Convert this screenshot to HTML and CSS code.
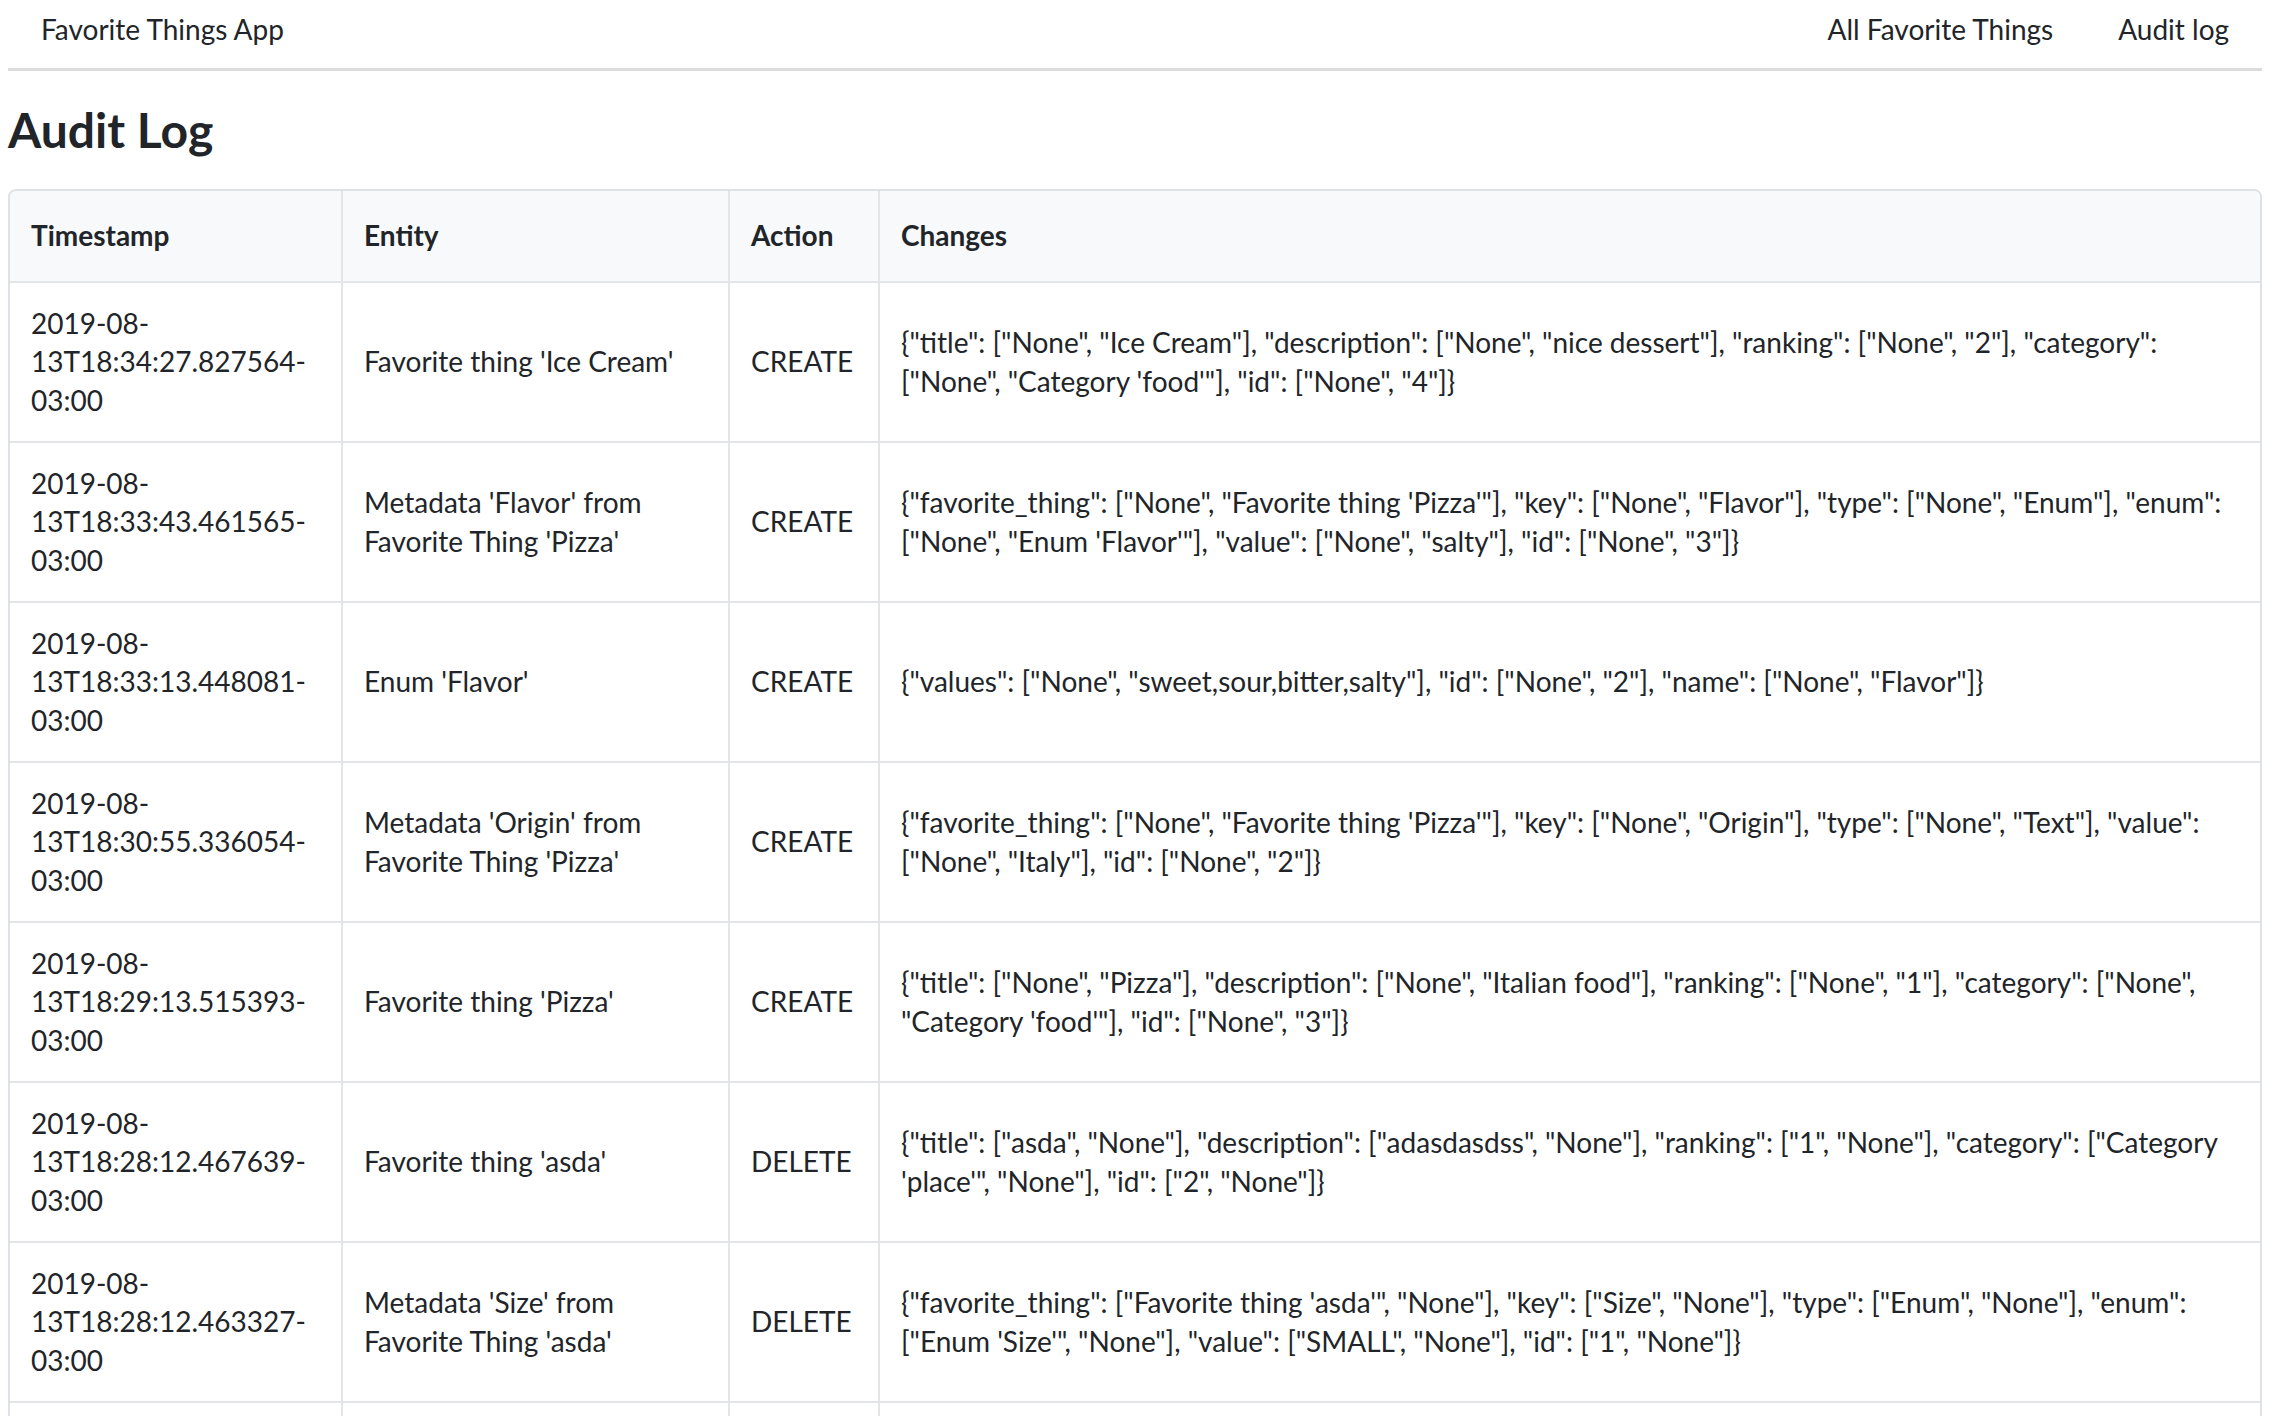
FILE: index.html
```html
<!DOCTYPE html>
<html lang="en">
<head>
<meta charset="utf-8">
<title>Favorite Things App - Audit Log</title>
<link rel="stylesheet" href="styles.css">
</head>
<body>
<div class="page">
  <nav class="navbar">
    <a class="brand" href="#">Favorite Things App</a>
    <div class="nav-links">
      <a class="nav-link" href="#">All Favorite Things</a>
      <a class="nav-link" href="#">Audit log</a>
    </div>
  </nav>

  <h1 class="title">Audit Log</h1>

  <div class="table-wrap">
    <table class="audit">
      <colgroup>
        <col class="col-ts">
        <col class="col-entity">
        <col class="col-action">
        <col class="col-changes">
      </colgroup>
      <thead>
        <tr>
          <th>Timestamp</th>
          <th>Entity</th>
          <th>Action</th>
          <th>Changes</th>
        </tr>
      </thead>
      <tbody>
        <tr>
          <td>2019-08-13T18:34:27.827564-03:00</td>
          <td>Favorite thing 'Ice Cream'</td>
          <td>CREATE</td>
          <td>{"title": ["None", "Ice Cream"], "description": ["None", "nice dessert"], "ranking": ["None", "2"], "category": ["None", "Category 'food'"], "id": ["None", "4"]}</td>
        </tr>
        <tr>
          <td>2019-08-13T18:33:43.461565-03:00</td>
          <td>Metadata 'Flavor' from Favorite Thing 'Pizza'</td>
          <td>CREATE</td>
          <td>{"favorite_thing": ["None", "Favorite thing 'Pizza'"], "key": ["None", "Flavor"], "type": ["None", "Enum"], "enum": ["None", "Enum 'Flavor'"], "value": ["None", "salty"], "id": ["None", "3"]}</td>
        </tr>
        <tr>
          <td>2019-08-13T18:33:13.448081-03:00</td>
          <td>Enum 'Flavor'</td>
          <td>CREATE</td>
          <td>{"values": ["None", "sweet,sour,bitter,salty"], "id": ["None", "2"], "name": ["None", "Flavor"]}</td>
        </tr>
        <tr>
          <td>2019-08-13T18:30:55.336054-03:00</td>
          <td>Metadata 'Origin' from Favorite Thing 'Pizza'</td>
          <td>CREATE</td>
          <td>{"favorite_thing": ["None", "Favorite thing 'Pizza'"], "key": ["None", "Origin"], "type": ["None", "Text"], "value": ["None", "Italy"], "id": ["None", "2"]}</td>
        </tr>
        <tr>
          <td>2019-08-13T18:29:13.515393-03:00</td>
          <td>Favorite thing 'Pizza'</td>
          <td>CREATE</td>
          <td>{"title": ["None", "Pizza"], "description": ["None", "Italian food"], "ranking": ["None", "1"], "category": ["None", "Category 'food'"], "id": ["None", "3"]}</td>
        </tr>
        <tr>
          <td>2019-08-13T18:28:12.467639-03:00</td>
          <td>Favorite thing 'asda'</td>
          <td>DELETE</td>
          <td>{"title": ["asda", "None"], "description": ["adasdasdss", "None"], "ranking": ["1", "None"], "category": ["Category 'place'", "None"], "id": ["2", "None"]}</td>
        </tr>
        <tr>
          <td>2019-08-13T18:28:12.463327-03:00</td>
          <td>Metadata 'Size' from Favorite Thing 'asda'</td>
          <td>DELETE</td>
          <td>{"favorite_thing": ["Favorite thing 'asda'", "None"], "key": ["Size", "None"], "type": ["Enum", "None"], "enum": ["Enum 'Size'", "None"], "value": ["SMALL", "None"], "id": ["1", "None"]}</td>
        </tr>
        <tr>
          <td>2019-08-13T18:28:12.459101-03:00</td>
          <td>Enum 'Size'</td>
          <td>DELETE</td>
          <td>{"values": ["SMALL,MEDIUM,LARGE", "None"], "id": ["1", "None"], "name": ["Size", "None"]}</td>
        </tr>
      </tbody>
    </table>
  </div>
</div>
</body>
</html>
```

FILE: styles.css
```css
html, body {
  margin: 0;
  padding: 0;
  background: #ffffff;
}

body {
  font-family: "Lato", "Noto Sans", "Liberation Sans", sans-serif;
  font-size: 28px;
  line-height: 38.4px;
  color: #212529;
}

.page {
  margin: 0 18px 0 8px;
}

.navbar {
  display: flex;
  justify-content: space-between;
  align-items: baseline;
  padding: 10px 33px 20px 33px;
  border-bottom: 3px solid #dcdcdc;
}

.brand,
.nav-link {
  color: #212529;
  text-decoration: none;
}

.nav-links {
  display: flex;
  gap: 65px;
}

.title {
  font-size: 48px;
  font-weight: 700;
  line-height: 1.2;
  margin: 30px 0 29.5px 0;
}

.table-wrap {
  border: 2px solid #dee2e6;
  border-radius: 8px;
  overflow: hidden;
}

.audit {
  width: 100%;
  table-layout: fixed;
  border-collapse: separate;
  border-spacing: 0;
}

.col-ts { width: 331px; }
.col-entity { width: 387px; }
.col-action { width: 150px; }

.audit th,
.audit td {
  text-align: left;
  vertical-align: middle;
  border-left: 2px solid #e3e5e8;
  border-top: 2px solid #e3e5e8;
  padding: 21.4px 19px 21.4px 21px;
  overflow-wrap: break-word;
}

.audit th {
  background: #f8f9fa;
  font-weight: 700;
  padding-top: 25.8px;
  padding-bottom: 25.8px;
  border-top: none;
}

.audit th:first-child,
.audit td:first-child {
  border-left: none;
}
```
